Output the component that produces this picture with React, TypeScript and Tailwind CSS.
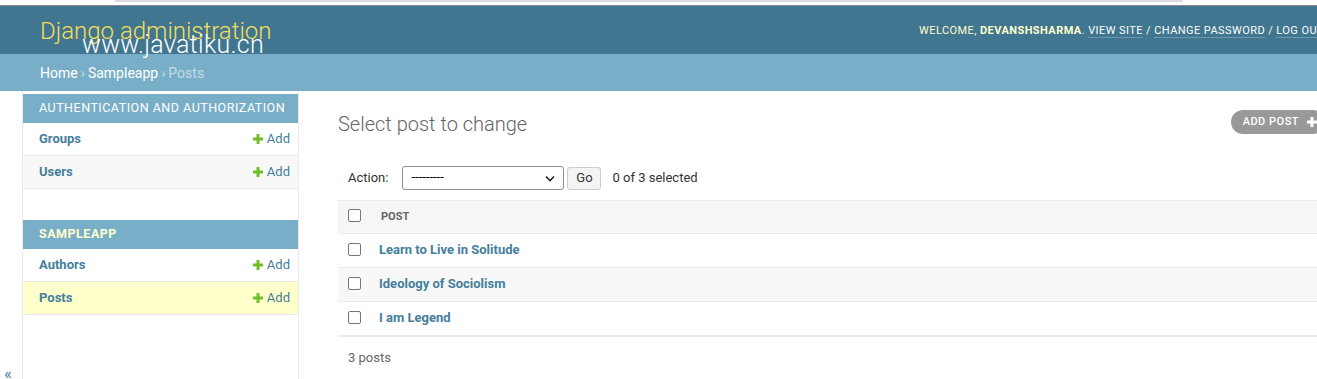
import React from "react";

const font = { fontFamily: "Roboto, 'Liberation Sans', sans-serif" };

function Checkbox() {
  return <div className="w-[13px] h-[13px] border border-[#767676] rounded-[2px] bg-white" />;
}

function Plus({ className = "" }: { className?: string }) {
  return (
    <svg width="10" height="10" viewBox="0 0 10 10" className={className}>
      <rect x="3.5" y="0" width="3" height="10" fill="#70bf2b" />
      <rect x="0" y="3.5" width="10" height="3" fill="#70bf2b" />
    </svg>
  );
}

function SideRow({ name, bg = "bg-white" }: { name: string; bg?: string }) {
  return (
    <div className={`flex items-center justify-between h-[33px] pl-4 pr-[8px] border-b border-[#eaeaea] ${bg}`}>
      <span className="text-[13px] font-bold text-[#447e9b]">{name}</span>
      <span className="flex items-center gap-[4px] text-[13px] text-[#447e9b]">
        <Plus />
        Add
      </span>
    </div>
  );
}

function Caption({ text, color = "text-white" }: { text: string; color?: string }) {
  return (
    <div className={`h-[29px] flex items-center pl-4 bg-[#79aec8] text-[12.5px] tracking-[0.5px] uppercase ${color}`}>
      {text}
    </div>
  );
}

function PostRow({ title, bg }: { title: string; bg: string }) {
  return (
    <div className={`flex items-center h-[34px] border-b border-[#eaeaea] ${bg}`}>
      <div className="w-[41px] pl-[10px] -mt-[2px]">
        <Checkbox />
      </div>
      <span className="text-[13px] font-bold text-[#447e9b] -mt-[2px]">{title}</span>
    </div>
  );
}

export default function App() {
  return (
    <div className="w-[1317px] h-[379px] overflow-hidden bg-white relative" style={font}>
      <div className="w-[1364px]">
        {/* top browser strip */}
        <div className="h-[5px] bg-white relative">
          <div className="absolute left-[115px] top-0 w-[1068px] h-[2px] bg-[#dcdcdc] rounded-r-full" />
        </div>
        <div className="h-[1px] bg-[#8a8a8a]" />
        {/* header */}
        <div className="h-[48px] bg-[#417690] flex items-center justify-between px-10 relative">
          <div className="text-[24px] font-light text-[#f5dd5d] mt-[1px]">Django administration</div>
          <div className="text-[11px] tracking-[0.43px] uppercase text-[#ffc] mt-[3px]">
            WELCOME, <strong className="font-bold">DEVANSHSHARMA</strong>.{" "}
            <span className="text-white border-b border-white/25">VIEW SITE</span> /{" "}
            <span className="text-white border-b border-white/25">CHANGE PASSWORD</span> /{" "}
            <span className="text-white border-b border-white/25">LOG OUT</span>
          </div>
          <div className="absolute left-[82px] top-[26px] text-[25px] font-light text-white leading-none tracking-[0.3px]">
            www.javatiku.cn
          </div>
        </div>
        {/* breadcrumbs */}
        <div className="h-[37px] bg-[#79aec8] flex items-center px-10 pt-[2px] text-[14px] text-[#c4dce8]">
          <span className="text-white">Home</span>
          <span className="mx-[3px]">›</span>
          <span className="text-white">Sampleapp</span>
          <span className="mx-[3px]">›</span>
          <span>Posts</span>
        </div>
        {/* body */}
        <div className="flex h-[300px]">
          <div className="w-[23px] border-r border-[#eaeaea] relative shrink-0">
            <span className="absolute left-[4px] top-[274px] text-[17px] text-[#447e9b] leading-none">«</span>
          </div>
          <div className="w-[276px] shrink-0 border-r border-[#eaeaea] pt-[2px]">
            <div className="h-[1px]" />
            <Caption text="Authentication and Authorization" />
            <SideRow name="Groups" />
            <SideRow name="Users" bg="bg-[#f8f8f8]" />
            <div className="h-[31px]" />
            <Caption text="Sampleapp" color="text-[#ffc] font-bold" />
            <SideRow name="Authors" />
            <SideRow name="Posts" bg="bg-[#ffc]" />
          </div>
          <div className="flex-1 pl-[39px] pr-10 pt-[17px]">
            <div className="flex items-start justify-between">
              <h1 className="text-[20px] font-light text-[#666] mt-[1px]">Select post to change</h1>
              <div className="mt-[2px] mr-[-1px] flex items-center h-[24px] pl-[12px] pr-[8px] rounded-[15px] bg-[#999] text-white text-[11px] tracking-[0.5px] uppercase font-medium">
                ADD POST
                <svg width="10" height="10" viewBox="0 0 10 10" className="ml-[8px]">
                  <rect x="3.5" y="0" width="3" height="10" fill="#fff" />
                  <rect x="0" y="3.5" width="10" height="3" fill="#fff" />
                </svg>
              </div>
            </div>
            <div className="mt-[22px] flex items-center h-[34px] pl-[10px] text-[13px] text-[#333]">
              <span className="text-[#333]">Action:</span>
              <div className="ml-[14px] w-[162px] h-[24px] border border-[#8f8f8f] rounded-[3px] flex items-center justify-between px-[8px]">
                <span className="text-[13px] text-black -mt-[2px]">---------</span>
                <svg width="10" height="7" viewBox="0 0 10 7">
                  <path d="M1 1.5 L5 5.5 L9 1.5" stroke="#222" strokeWidth="1.6" fill="none" />
                </svg>
              </div>
              <div className="ml-[3px] w-[34px] h-[23px] border border-[#ccc] rounded-[3px] bg-[#f4f4f4] flex items-center justify-center text-[13px] text-[#333]">
                Go
              </div>
              <span className="ml-[11px] text-[#333]">0 of 3 selected</span>
            </div>
            <div className="mt-[5px] border-t border-[#eaeaea]">
              <div className="flex items-center h-[33px] bg-[#f6f6f6] border-b border-[#eaeaea]">
                <div className="w-[43px] pl-[10px] -mt-[4px]">
                  <Checkbox />
                </div>
                <span className="text-[11px] font-bold text-[#666] uppercase">POST</span>
              </div>
              <PostRow title="Learn to Live in Solitude" bg="bg-white" />
              <PostRow title="Ideology of Sociolism" bg="bg-[#f8f8f8]" />
              <PostRow title="I am Legend" bg="bg-white" />
              <div className="h-[1px] bg-[#eaeaea]" />
              <div className="pl-[10px] pt-[11px] text-[13px] text-[#666]">3 posts</div>
            </div>
          </div>
        </div>
      </div>
    </div>
  );
}
